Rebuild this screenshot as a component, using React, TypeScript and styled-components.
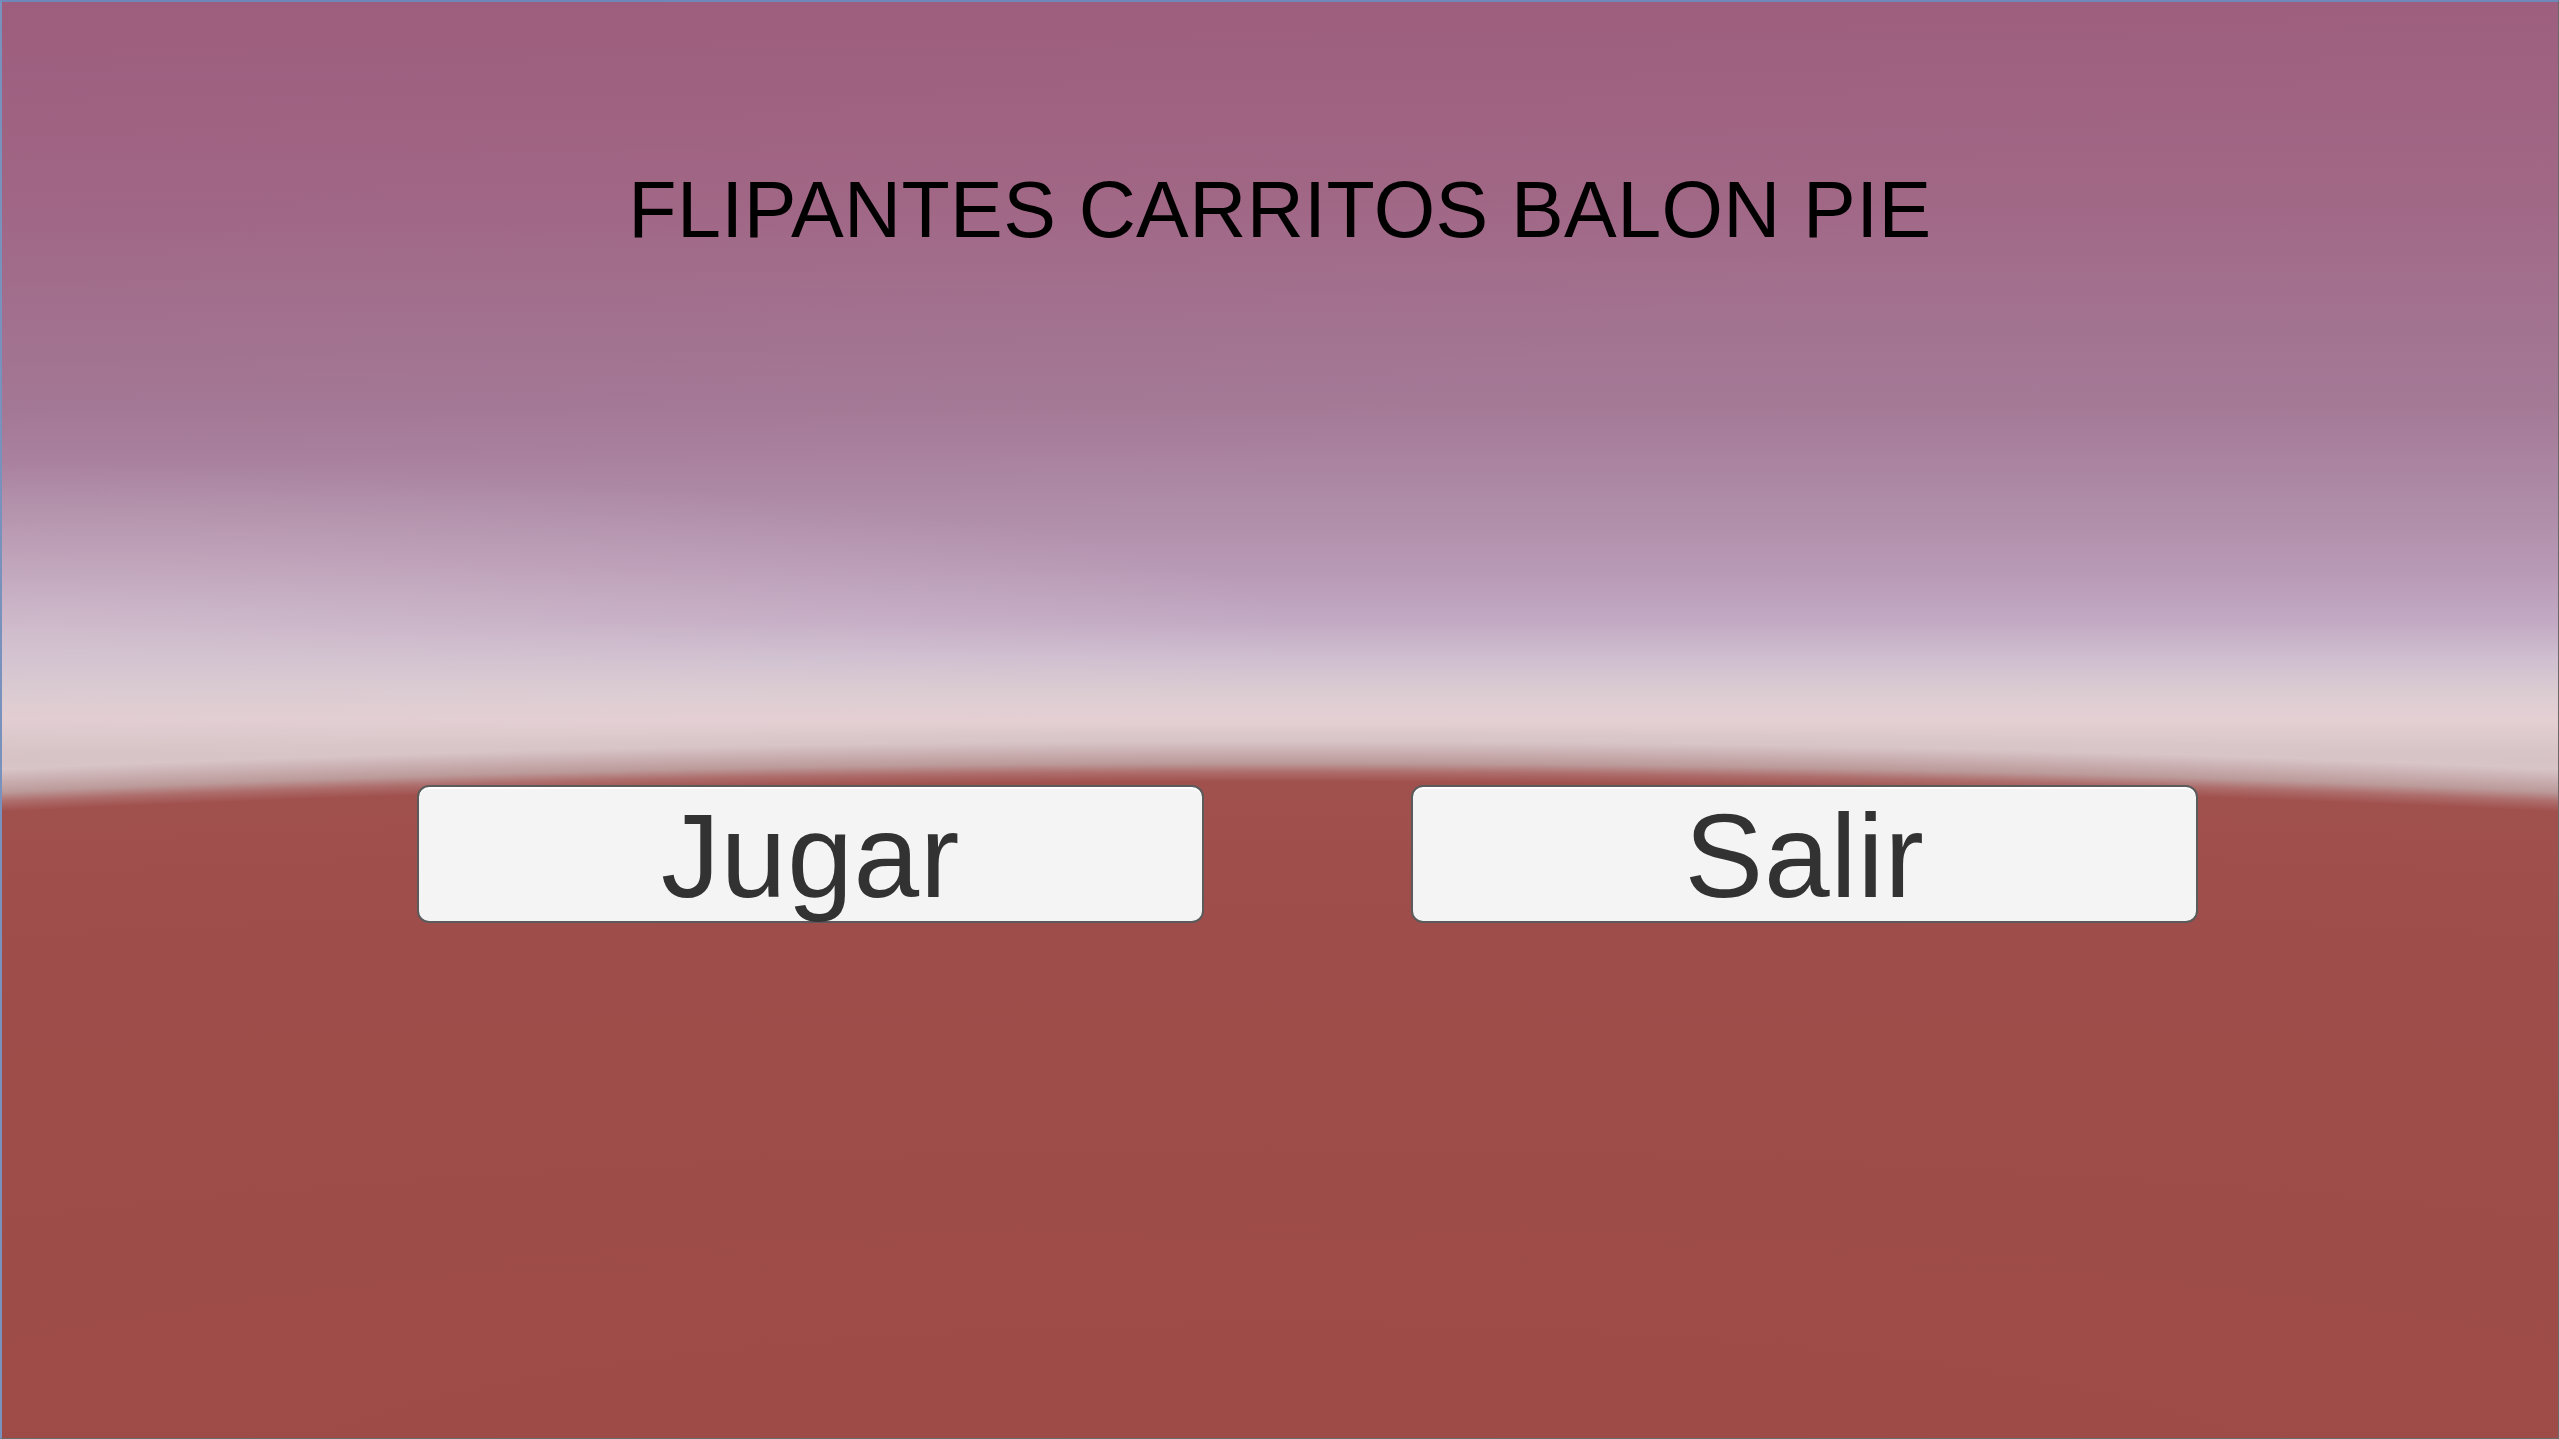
import styled, { createGlobalStyle } from 'styled-components';

const GlobalStyle = createGlobalStyle`
  html, body {
    margin: 0;
    padding: 0;
    width: 100%;
    height: 100%;
    overflow: hidden;
  }
  #root {
    height: 100%;
  }
`;

// flat sky bands, a soft lighter patch on the left, and the ground as a very wide
// ellipse so the horizon bows down a little towards the sides
const Scene = styled.div`
  box-sizing: border-box;
  width: 2559px;
  height: 1439px;
  display: flex;
  flex-direction: column;
  align-items: stretch;
  border-top: 2px solid #6d88b9;
  border-left: 2px solid #7891bd;
  border-right: 1px solid #6a6a6a;
  border-bottom: 1px solid #6a6a6a;
  font-family: 'Liberation Sans', Arial, sans-serif;
  background:
    radial-gradient(
      ellipse 4417px 700px at 50% 1480px,
      #9e4b47 0%,
      #9f4d4a 80%,
      #a0504d 100%,
      #ad6d6b 101.4%,
      #bc9a9a 102.7%,
      #d8c5c8 105.9%,
      rgba(222, 205, 210, 0) 108%
    ),
    radial-gradient(
      ellipse 1300px 170px at 0% 630px,
      rgba(222, 209, 214, 0.45) 0%,
      rgba(222, 209, 214, 0) 100%
    ),
    linear-gradient(160deg, rgba(150, 80, 115, 0.1) 0%, rgba(150, 80, 115, 0) 40%),
    linear-gradient(
      to bottom,
      #9e5f7e 0px,
      #a16886 200px,
      #a2718f 300px,
      #a47a97 407px,
      #b08eaa 514px,
      #b899b5 568px,
      #c3aac4 621px,
      #cfbfd0 657px,
      #dccdd2 693px,
      #e5cfd3 718px,
      #dac8ca 740px,
      #cfb6b6 790px,
      #a0504d 815px,
      #9e4b47 1439px
    );
`;

const Title = styled.h1`
  margin: 168px 0 0;
  padding: 0;
  text-align: center;
  font-size: 79px;
  font-weight: 400;
  letter-spacing: 0.4px;
  line-height: 1;
  color: #000;
`;

const ButtonRow = styled.div`
  display: flex;
  gap: 207px;
  margin-top: 536px;
  padding-left: 415px;
`;

const MenuButton = styled.button`
  box-sizing: border-box;
  width: 787px;
  height: 138px;
  display: flex;
  align-items: center;
  justify-content: center;
  padding: 3px 0 0;
  background: #f4f4f4;
  border: 2px solid #5b5b5b;
  border-radius: 12px;
  box-shadow: inset 0 2px 0 #ffffff;
  font-family: 'Liberation Sans', Arial, sans-serif;
  font-size: 118px;
  letter-spacing: 0.8px;
  line-height: 1;
  color: #323232;
  cursor: pointer;
`;

export default function App() {
  return (
    <>
      <GlobalStyle />
      <Scene>
        <Title>FLIPANTES CARRITOS BALON PIE</Title>
        <ButtonRow>
          <MenuButton>Jugar</MenuButton>
          <MenuButton>Salir</MenuButton>
        </ButtonRow>
      </Scene>
    </>
  );
}
